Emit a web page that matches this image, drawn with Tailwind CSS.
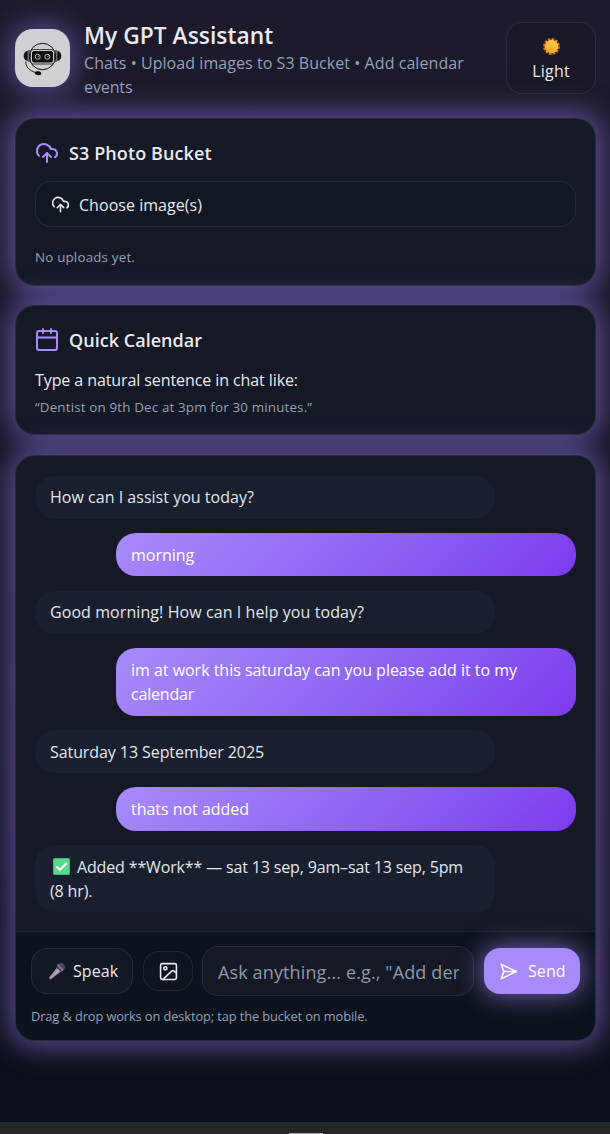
<!DOCTYPE html>
<html lang="en">
<head>
<meta charset="utf-8">
<title>My GPT Assistant</title>
<script src="https://cdn.jsdelivr.net/npm/@tailwindcss/browser@4"></script>
</head>
<body class="bg-[#0b0f18] font-['Open_Sans','Noto_Sans',sans-serif] text-base leading-6 text-[#e8eaf2]">
<div class="flex h-[1134px] w-[610px] flex-col overflow-hidden bg-linear-to-b from-[#1d1a2c] via-[#151522] to-[#0a0f18]">
  <div class="flex flex-1 flex-col pt-[22px] pr-[14px] pl-[15px]">
    <header class="flex h-[72px] items-center">
      <div class="h-[58px] w-[55px] shrink-0 rounded-[18px] bg-[#d0cfd3] shadow-[0_0_26px_4px_rgba(150,120,240,0.5)]">
        <svg class="h-[58px] w-[55px]" viewBox="0 0 55 58" fill="none" stroke="#0c0c0e">
          <circle cx="27.5" cy="27.500" r="13.2" stroke-width="1"/>
          <path d="M12.500 22C10 22.500 8.900 24.500 8.900 27s1.200 4.300 3.600 4.800zM42.500 22C45 22.500 46 24.500 46 27s-1.100 4.300-3.500 4.800z" fill="#0c0c0e" stroke-width=".5"/>
          <path d="M14 21v12M41 21v12" stroke-width="1"/>
          <rect x="15.500" y="20.500" width="24" height="14.500" rx="3" fill="#d0cfd3" stroke-width=".8"/>
          <rect x="17.500" y="22.500" width="20" height="10.500" rx="1.500" fill="#111114" stroke-width="1"/>
          <circle cx="22.700" cy="27.800" r="2.500" stroke="#c8c8cc" stroke-width=".9"/>
          <circle cx="32.300" cy="27.800" r="2.500" stroke="#c8c8cc" stroke-width=".9"/>
          <path d="M22.700 27.800l1.500-1M32.300 27.800l1.500-1" stroke="#c8c8cc" stroke-width=".8"/>
          <path d="M10.800 32.500c-.2 5.500 4 9.500 10 11" stroke-width=".9"/>
          <ellipse cx="23" cy="44.200" rx="2.700" ry="1.400" fill="#0c0c0e" transform="rotate(8 23 44)"/>
        </svg>
      </div>
      <div class="ml-[14px] flex-1 pt-[3px]">
        <h1 class="text-[22.800px] leading-[30px] font-semibold tracking-[0.02px]">My GPT Assistant</h1>
        <p class="tracking-[0.06px] text-[#94a0b8]">Chats • Upload images to S3 Bucket • Add calendar<br><span class="tracking-[-0.1px]">events</span></p>
      </div>
      <button class="flex h-[72px] w-[90px] flex-col items-center rounded-[16px] border border-white/8 bg-[#171724]/60 pt-[14px]">
        <svg class="h-[19px] w-[19px]" viewBox="0 0 19 19">
          <defs><linearGradient id="sun" x1="0.7" y1="0" x2="0.2" y2="1"><stop offset="0" stop-color="#fdd13c"/><stop offset="1" stop-color="#eda52c"/></linearGradient></defs>
          <circle cx="9.500" cy="9.500" r="7.300" fill="none" stroke="#e4752d" stroke-width="2.200" stroke-dasharray="2.500 1.320"/>
          <circle cx="9.500" cy="9.500" r="6.800" fill="url(#sun)"/>
        </svg>
        <span class="mt-[3px] tracking-[0.2px]">Light</span>
      </button>
    </header>

    <section class="mt-6 h-[168px] rounded-[20px] border border-white/8 bg-[#151825] px-[19px] pt-[21px] shadow-[0_0_28px_6px_rgba(150,120,235,0.56)]">
      <div class="flex h-[26px] items-center gap-[10px]">
        <svg class="h-6 w-6" viewBox="0 0 24 24" fill="none" stroke="#a78bfa" stroke-width="2" stroke-linecap="round" stroke-linejoin="round"><path d="M4 14.900A7 7 0 1 1 15.710 8h1.790a4.500 4.500 0 0 1 2.500 8.240"/><path d="M12 12v9"/><path d="m16 16-4-4-4 4"/></svg>
        <h2 class="text-lg font-semibold tracking-[0.1px]">S3 Photo Bucket</h2>
      </div>
      <button class="mt-[15px] flex h-[46px] w-[541px] items-center rounded-[16px] border border-white/8 bg-[#111723] px-[15px]">
        <svg class="h-[19px] w-[19px]" viewBox="0 0 24 24" fill="none" stroke="#e8eaf2" stroke-width="2" stroke-linecap="round" stroke-linejoin="round"><path d="M4 14.900A7 7 0 1 1 15.710 8h1.790a4.500 4.500 0 0 1 2.500 8.240"/><path d="M12 12v9"/><path d="m16 16-4-4-4 4"/></svg>
        <span class="ml-[9px] pt-[2px] tracking-[0.04px]">Choose image(s)</span>
      </button>
      <p class="mt-5 text-[13.400px] leading-5 tracking-[0.17px] text-[#94a0b8]">No uploads yet.</p>
    </section>

    <section class="mt-[19px] h-[130px] rounded-[20px] border border-white/8 bg-[#151825] px-[19px] pt-[21px] shadow-[0_0_28px_6px_rgba(150,120,235,0.56)]">
      <div class="flex h-[26px] items-center gap-[10px]">
        <svg class="h-6 w-6" viewBox="0 0 24 24" fill="none" stroke="#a78bfa" stroke-width="2" stroke-linecap="round" stroke-linejoin="round"><path d="M8 1v4M16 1v4"/><rect x="2" y="3" width="20" height="19" rx="2"/><path d="M2 9.500h20"/></svg>
        <h2 class="text-lg font-semibold tracking-[0.03px]">Quick Calendar</h2>
      </div>
      <p class="mt-[15px] tracking-[-0.09px]">Type a natural sentence in chat like:</p>
      <p class="mt-[5px] text-[13.400px] leading-5 tracking-[0.15px] text-[#94a0b8]">“Dentist on 9th Dec at 3pm for 30 minutes.”</p>
    </section>

    <section class="mt-5 flex h-[586px] flex-col rounded-[20px] border border-white/8 bg-[#151825] shadow-[0_0_28px_6px_rgba(150,120,235,0.56)]">
      <div class="flex h-[475px] flex-col gap-[14.400px] px-[19px] pt-[19.600px] text-[#e2e6ee]">
        <div class="w-[460px] rounded-[20px] bg-[#1a1f2d] px-[15px] py-[9.600px] tracking-[0.02px]">How can I assist you today?</div>
        <div class="w-[460px] self-end rounded-[20px] bg-linear-135 from-[#a78bfa] to-[#7c3aed] px-[15px] py-[9.600px] tracking-[-0.02px] text-white">morning</div>
        <div class="w-[460px] rounded-[20px] bg-[#1a1f2d] px-[15px] py-[9.600px] tracking-[0.08px]">Good morning! How can I help you today?</div>
        <div class="w-[460px] self-end rounded-[20px] bg-linear-135 from-[#a78bfa] to-[#7c3aed] px-[15px] py-[9.600px] tracking-[-0.02px] text-white">im at work this saturday can you please add it to my<br><span class="tracking-[-0.2px]">calendar</span></div>
        <div class="w-[460px] rounded-[20px] bg-[#1a1f2d] px-[15px] py-[9.600px] tracking-[-0.08px]">Saturday 13 September 2025</div>
        <div class="w-[460px] self-end rounded-[20px] bg-linear-135 from-[#a78bfa] to-[#7c3aed] px-[15px] py-[9.600px] tracking-[-0.03px] text-white">thats not added</div>
        <div class="w-[460px] rounded-[20px] bg-[#1a1f2d] px-[15px] py-[9.600px] tracking-[-0.15px]">
          <div class="flex items-center whitespace-nowrap"><svg class="mr-[7px] ml-[3px] h-[17px] w-[17px]" viewBox="0 0 17 17"><rect width="17" height="17" rx="1.500" fill="#3fb67b"/><rect x="1" y="1" width="15" height="15" rx="1" fill="#58d98b"/><path d="M3.500 8.500l3.300 3.300L13.800 5" fill="none" stroke="#fff" stroke-width="2"/></svg>Added **Work** — sat 13 sep, 9am–sat 13 sep, 5pm</div>
          <div>(8 hr).</div>
        </div>
      </div>
      <footer class="flex-1 rounded-b-[19px] border-t border-white/8 bg-[#0d131d] px-[15px] pt-[14px]">
        <div class="flex h-[50px] items-center">
          <button class="flex h-[46px] w-[102px] shrink-0 items-center rounded-[16px] border border-white/8 bg-[#131825] pl-[16px]">
            <svg class="h-[18px] w-[18px]" viewBox="0 0 18 18"><path d="M1 15.500L9 5.500l4 4L3 17.200Q1 17.500 1 15.500z" fill="#9a929b"/><path d="M3 15.500l7.500-8 1 1z" fill="#c5bfc4"/><path d="M9 3.500Q11.500 0 15 1.500q3 2.500 1.500 5.500l-3 3.500-5-5z" fill="#52436b"/><path d="M9.500 2.500l5.500 6" stroke="#8b809b" stroke-width="1.400"/></svg>
            <span class="ml-[7px] tracking-[0.1px]">Speak</span>
          </button>
          <button class="ml-[10px] flex h-10 w-[50px] shrink-0 items-center justify-center rounded-[16px] border border-white/8 bg-[#0f1520]">
            <svg class="h-[19px] w-[19px]" viewBox="0 0 24 24" fill="none" stroke="#e8eaf2" stroke-width="2" stroke-linecap="round" stroke-linejoin="round"><rect x="2" y="2" width="20" height="20" rx="2"/><circle cx="8" cy="8" r="2"/><path d="m22 14-3-2.500c-1-.8-2-.8-3 0L5 22"/></svg>
          </button>
          <div class="ml-[9px] flex h-[50px] w-[272px] shrink-0 items-center rounded-[16px] border border-white/8 bg-[#151825] px-[14px]">
            <div class="w-[243px] overflow-hidden pt-[2px] pl-[1px] text-lg leading-7 tracking-[0.13px] whitespace-nowrap text-[#8e99a9]">Ask anything... e.g., "Add der</div>
          </div>
          <button class="ml-[10px] flex h-[46px] w-24 shrink-0 items-center rounded-[16px] bg-[#a78bfa] pl-[15px] text-white shadow-[0_0_24px_2px_rgba(167,139,250,0.6)]">
            <svg class="h-[19px] w-[19px]" viewBox="0 0 24 24" fill="none" stroke="#fff" stroke-width="2" stroke-linecap="round" stroke-linejoin="round"><path d="M3 3l3 9-3 9 19-9z"/><path d="M6 12h16"/></svg>
            <span class="ml-[10px] tracking-[0.1px]">Send</span>
          </button>
        </div>
        <p class="mt-[10px] text-[12.800px] leading-5 tracking-[-0.09px] text-[#94a0b8]">Drag &amp; drop works on desktop; tap the bucket on mobile.</p>
      </footer>
    </section>
  </div>
  <div class="flex h-3 items-end bg-[#252625]"><div class="ml-[289px] h-px w-[34px] bg-[#b0b0b0]"></div></div>
</div>
</body>
</html>
